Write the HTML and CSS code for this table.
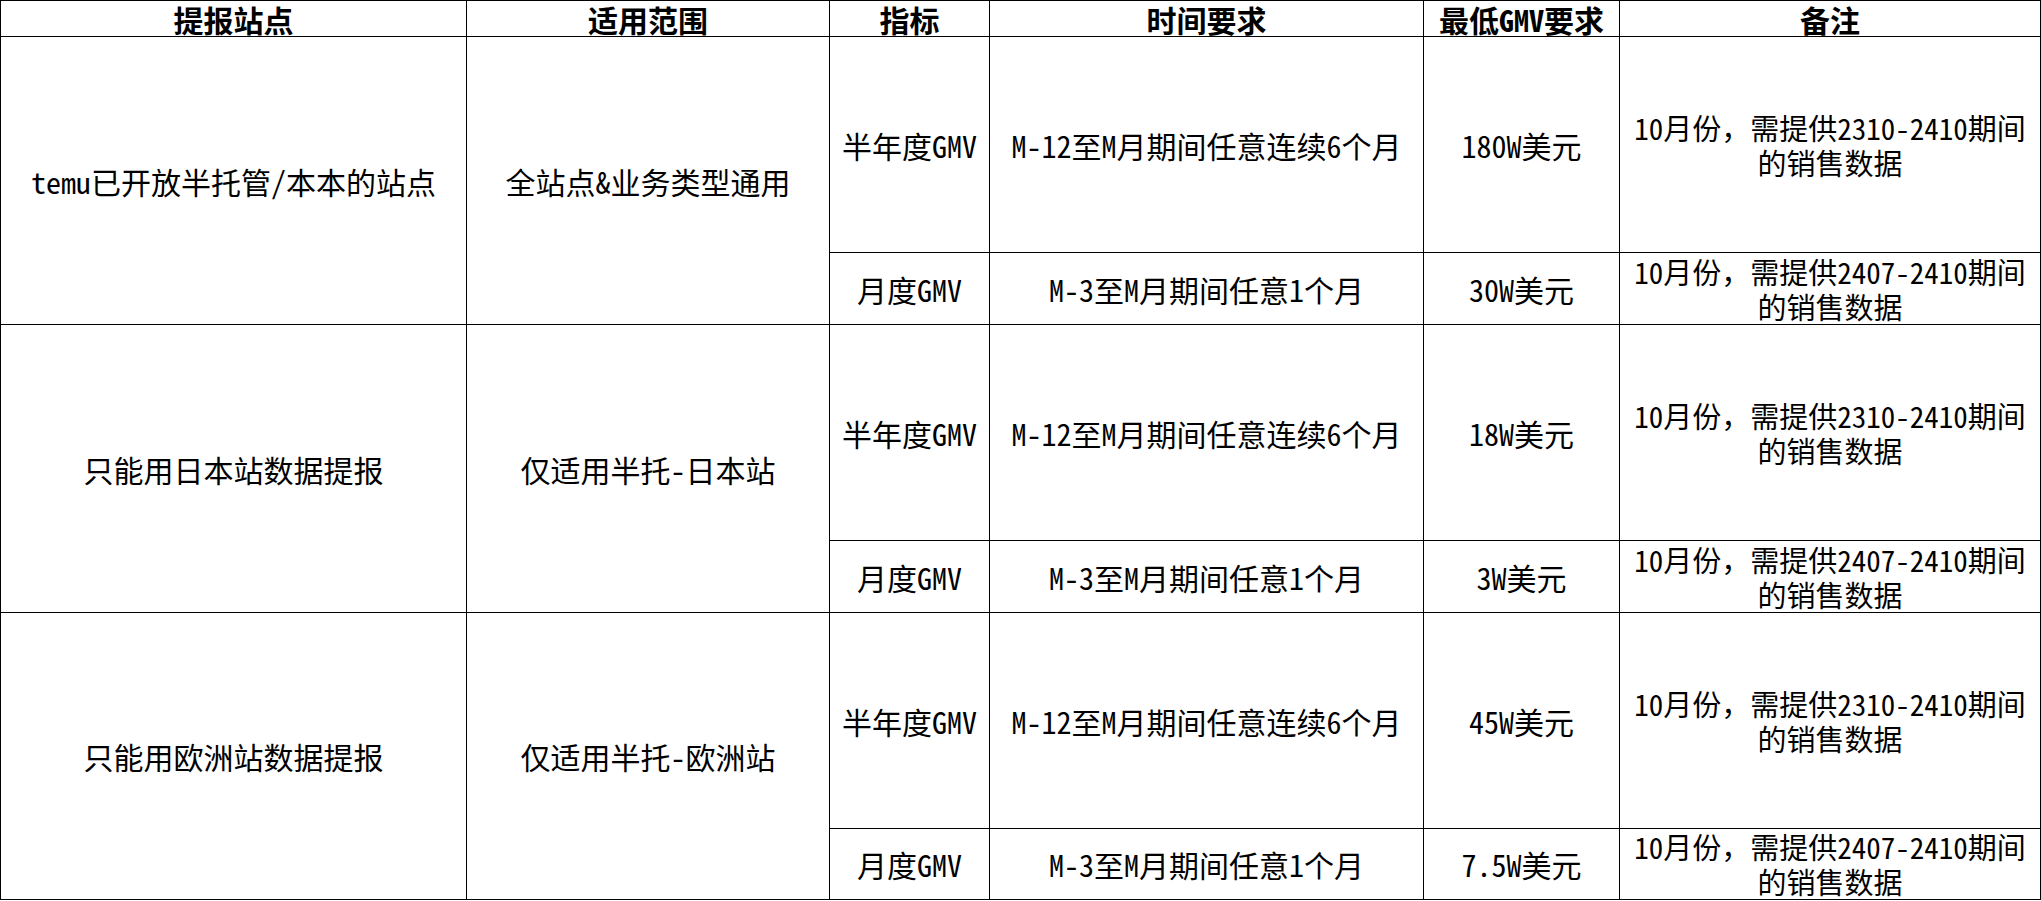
FILE: index.html
```html
<!DOCTYPE html>
<html lang="zh-CN">
<head>
<meta charset="utf-8">
<title>GMV 提报要求</title>
<link rel="stylesheet" href="styles.css">
</head>
<body>
<table class="sheet">
  <colgroup>
    <col class="c-site">
    <col class="c-scope">
    <col class="c-metric">
    <col class="c-time">
    <col class="c-gmv">
    <col class="c-note">
  </colgroup>
  <thead>
    <tr class="r-head">
      <th>提报站点</th>
      <th>适用范围</th>
      <th>指标</th>
      <th>时间要求</th>
      <th>最低GMV要求</th>
      <th>备注</th>
    </tr>
  </thead>
  <tbody>
    <tr class="r-tall">
      <td rowspan="2">temu已开放半托管/本本的站点</td>
      <td rowspan="2">全站点&amp;业务类型通用</td>
      <td>半年度GMV</td>
      <td>M-12至M月期间任意连续6个月</td>
      <td>180W美元</td>
      <td class="note">10月份，需提供2310-2410期间<br>的销售数据</td>
    </tr>
    <tr class="r-short">
      <td>月度GMV</td>
      <td>M-3至M月期间任意1个月</td>
      <td>30W美元</td>
      <td class="note">10月份，需提供2407-2410期间<br>的销售数据</td>
    </tr>
    <tr class="r-tall">
      <td rowspan="2">只能用日本站数据提报</td>
      <td rowspan="2">仅适用半托-日本站</td>
      <td>半年度GMV</td>
      <td>M-12至M月期间任意连续6个月</td>
      <td>18W美元</td>
      <td class="note">10月份，需提供2310-2410期间<br>的销售数据</td>
    </tr>
    <tr class="r-short">
      <td>月度GMV</td>
      <td>M-3至M月期间任意1个月</td>
      <td>3W美元</td>
      <td class="note">10月份，需提供2407-2410期间<br>的销售数据</td>
    </tr>
    <tr class="r-tall">
      <td rowspan="2">只能用欧洲站数据提报</td>
      <td rowspan="2">仅适用半托-欧洲站</td>
      <td>半年度GMV</td>
      <td>M-12至M月期间任意连续6个月</td>
      <td>45W美元</td>
      <td class="note">10月份，需提供2310-2410期间<br>的销售数据</td>
    </tr>
    <tr class="r-short r-last">
      <td>月度GMV</td>
      <td>M-3至M月期间任意1个月</td>
      <td>7.5W美元</td>
      <td class="note">10月份，需提供2407-2410期间<br>的销售数据</td>
    </tr>
  </tbody>
</table>
</body>
</html>
```

FILE: styles.css
```css
html, body {
  margin: 0;
  padding: 0;
  background: #ffffff;
}

.sheet {
  border-collapse: collapse;
  table-layout: fixed;
  width: 2040px;
  font-family: "Noto Sans Mono CJK SC", "Noto Sans CJK SC", "Liberation Mono", monospace;
  font-size: 30px;
  color: #000000;
}

.c-site { width: 466px; }
.c-scope { width: 363px; }
.c-metric { width: 160px; }
.c-time { width: 434px; }
.c-gmv { width: 196px; }
.c-note { width: 421px; }

.sheet th,
.sheet td {
  border: 1px solid #000000;
  padding: 0;
  text-align: center;
  vertical-align: middle;
  white-space: nowrap;
  line-height: 36px;
}

.sheet th {
  font-weight: 700;
  line-height: 32px;
}

.r-head { height: 36px; }
.r-tall { height: 216px; }
.r-short { height: 72px; }
.r-last { height: 70px; }

.sheet td.note {
  font-size: 29px;
  line-height: 35px;
}
```
